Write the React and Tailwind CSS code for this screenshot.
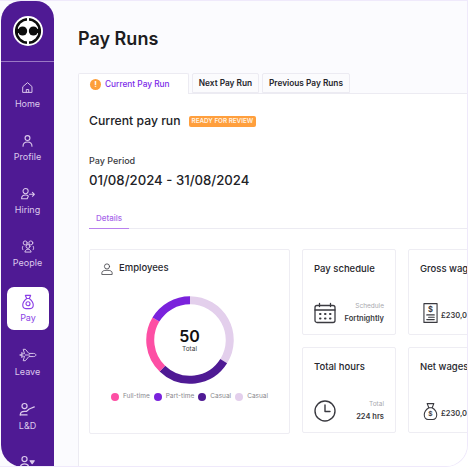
import React from "react";

const S = { fill: "none", stroke: "currentColor", strokeWidth: 1.5, strokeLinecap: "round", strokeLinejoin: "round" };

const icons = {
  Home: (
    <svg viewBox="0 0 16 16" className="w-[13px] h-[13px]" {...S} strokeWidth="1.2">
      <path d="M2.5 6.800 8 2l5.500 4.800V14h-11z" /><path d="M6.500 14v-3.500h3V14" />
    </svg>
  ),
  Profile: (
    <svg viewBox="0 0 16 16" className="w-[13px] h-[13px]" {...S} strokeWidth="1.4">
      <circle cx="8" cy="5" r="3" /><path d="M2.500 15c0-3.400 2.400-5.200 5.500-5.200s5.500 1.800 5.500 5.200" />
    </svg>
  ),
  Hiring: (
    <svg viewBox="0 0 20 16" className="w-[16px] h-[13px]" {...S} strokeWidth="1.300">
      <circle cx="7" cy="5" r="3.200" /><path d="M2 14.500c0-2.800 2-4.500 5-4.500 1.500 0 2.700.4 3.500 1.200L9 14.500z" /><path d="M12 9h6M15.500 6.500 18 9l-2.500 2.500" />
    </svg>
  ),
  People: (
    <svg viewBox="0 0 16 16" className="w-[14px] h-[14px]" {...S} strokeWidth="1.100">
      <circle cx="4.800" cy="4.500" r="2.300" /><circle cx="11.200" cy="4.500" r="2.300" /><circle cx="8" cy="8.500" r="2.200" /><path d="M2 8.500c-.8 1.500-.6 2.700.2 3.800M14 8.500c.8 1.500.6 2.700-.2 3.800M4.500 14.500c.5-2 1.800-2.800 3.500-2.800s3 .8 3.500 2.800z" />
    </svg>
  ),
  Pay: (
    <svg viewBox="0 0 16 18" className="w-[14px] h-[16px]" {...S} strokeWidth="1.300">
      <path d="M5 1.500h6L9.500 5h-3z" /><path d="M6.500 5C3.500 7.500 2 10 2 12.500 2 15 3.500 16.500 5.500 16.500h5c2 0 3.500-1.500 3.500-4 0-2.500-1.500-5-4.500-7.500" /><circle cx="8" cy="11" r="2.300" />
    </svg>
  ),
  Leave: (
    <svg viewBox="0 0 20 16" className="w-[18px] h-[14px]" {...S} strokeWidth="1.100">
      <path d="M1 8c1-1 3-1.500 5-1.500L4.500 1.500h2.500L11 6.200h5.500c1.500 0 2.500.9 2.500 1.800s-1 1.800-2.500 1.800H11L7 14.500H4.500L6 9.500C4 9.500 2 9 1 8z" /><path d="M3 5v6M7 8h5" />
    </svg>
  ),
  "L&D": (
    <svg viewBox="0 0 20 16" className="w-[17px] h-[14px]" {...S} strokeWidth="1.400">
      <circle cx="6.500" cy="4.500" r="3" /><path d="M1.500 15c0-3 2-4.300 5-4.300h2.500L12 8l6-2.500" /><path d="M1.500 15h8" />
    </svg>
  ),
  More: (
    <svg viewBox="0 0 20 16" className="w-[17px] h-[14px]" {...S} strokeWidth="1.400">
      <circle cx="6.500" cy="4.500" r="3" /><path d="M1.500 15c0-3.200 2-4.800 5-4.800s5 1.600 5 4.800" /><path d="M13 6.500h5L15.500 10z" fill="currentColor" />
    </svg>
  ),
};

function NavItem({ label, active, h }) {
  if (active) {
    return (
      <div className="ml-[6px] w-[42px] h-[43px] rounded-[7px] bg-white text-[#8b3fe6] flex flex-col items-center justify-center gap-[2px] text-[9px] leading-[12px] my-[7px]">
        {icons[label]}
        <span>{label}</span>
      </div>
    );
  }
  return (
    <div className={`${h} shrink-0 flex flex-col items-center justify-center gap-[4px] text-[#dcc9ec] text-[9px] leading-[12px]`}>
      {icons[label]}
      {label !== "More" && <span>{label}</span>}
    </div>
  );
}

function Sidebar() {
  return (
    <aside className="w-[53px] h-[466px] ml-px shrink-0 bg-[#4f1a94] rounded-tr-[18px] rounded-tl-[20px] rounded-bl-[22px] flex flex-col overflow-hidden">
      <div className="h-[61px] shrink-0 border-b border-[#9a78c4] flex items-center justify-center">
        <svg viewBox="0 0 30 30" className="w-[30px] h-[30px]">
          <circle cx="15" cy="15" r="15" fill="#fff" />
          <circle cx="15" cy="15" r="11.800" fill="none" stroke="#0c0c0c" strokeWidth="2.600" />
          <path d="M2 15h7M21 15h7" stroke="#0c0c0c" strokeWidth="4" />
          <circle cx="9.600" cy="15" r="4.600" fill="#0c0c0c" />
          <circle cx="20.400" cy="15" r="4.600" fill="#0c0c0c" />
          <path d="M15 1.500v4.500M15 24v4.500" stroke="#fff" strokeWidth="2" />
        </svg>
      </div>
      <div className="flex flex-col pt-[7px]">
        <NavItem label="Home" h="h-[53px]" />
        <NavItem label="Profile" h="h-[53px]" />
        <NavItem label="Hiring" h="h-[52px]" />
        <NavItem label="People" h="h-[53px]" />
        <NavItem label="Pay" active />
        <NavItem label="Leave" h="h-[52px]" />
        <NavItem label="L&D" h="h-[55px]" />
        <NavItem label="More" h="h-[35px]" />
      </div>
    </aside>
  );
}

function Tab({ children, active }) {
  return (
    <div
      className={
        active
          ? "w-[111px] h-[21px] -mb-px bg-white border border-b-0 border-[#ecebf2] rounded-t-[2px] flex items-center gap-[4px] pl-[11px] text-[#7c2ae8] text-[8.300px] font-medium z-10 whitespace-nowrap"
          : "h-[20px] bg-[#fbfbfd] border border-[#ecebf2] rounded-t-[2px] flex items-center justify-center text-[#26262c] text-[8.300px] font-semibold whitespace-nowrap"
      }
    >
      {children}
    </div>
  );
}

function Card({ title, label, value, icon, right }) {
  return (
    <div className="w-[94px] h-[86px] shrink-0 bg-white border border-[#eeedf3] rounded-[2px] pt-[12px] px-[11px] flex flex-col justify-between pb-[10px]">
      <div className="text-[9.500px] font-medium text-[#26262c] leading-[13px] whitespace-nowrap">{title}</div>
      {right ? (
        <div className="flex items-center justify-between text-[#3a3a40]">
          {icon}
          <div className="text-right">
            <div className="text-[6.500px] text-[#a8a8ae] mb-[4px] leading-[8px]">{label}</div>
            <div className="text-[7.500px] font-semibold text-[#3a3a40] leading-[10px] whitespace-nowrap">{value}</div>
          </div>
        </div>
      ) : (
        <div className="flex items-end gap-[3px] pl-[3px] text-[#3a3a40]">
          {icon}
          <div className="text-[7.500px] font-semibold text-[#3a3a40] leading-[10px] whitespace-nowrap mb-[3px]">{value}</div>
        </div>
      )}
    </div>
  );
}

const Legend = ({ color, label }) => (
  <div className="flex items-center gap-[4px]">
    <span className={`w-[8px] h-[8px] rounded-full ${color}`} />
    <span>{label}</span>
  </div>
);

function seg(startDeg, endDeg, r = 39.75) {
  const p = (d) => {
    const a = ((d - 90) * Math.PI) / 180;
    return `${44 + r * Math.cos(a)} ${44 + r * Math.sin(a)}`;
  };
  return `M${p(startDeg)} A${r} ${r} 0 ${endDeg - startDeg > 180 ? 1 : 0} 1 ${p(endDeg)}`;
}

function Donut() {
  return (
    <div className="relative w-[88px] h-[88px]">
      <svg viewBox="0 0 88 88" className="w-[88px] h-[88px]" fill="none" strokeWidth="8">
        <path d={seg(0, 122)} stroke="#e3cfec" />
        <path d={seg(122, 224)} stroke="#4f1a94" />
        <path d={seg(224, 301)} stroke="#fd4fa4" />
        <path d={seg(301, 360)} stroke="#7a22dc" />
      </svg>
      <div className="absolute inset-0 flex flex-col items-center justify-center">
        <div className="text-[16px] font-semibold text-[#111] leading-[18px]">50</div>
        <div className="text-[6.500px] text-[#3a3a40] leading-[9px]">Total</div>
      </div>
    </div>
  );
}

export default function App() {
  return (
    <div className="w-[468px] h-[468px] overflow-hidden bg-white flex" style={{ fontFamily: '"Inter", "Noto Sans", sans-serif' }}>
      <div className="w-[468px] h-[467px] rounded-br-[22px] bg-[#fbfbfe] border-t border-b border-r border-[#efe9fb] flex overflow-hidden">
        <Sidebar />
        <main className="grow min-w-0 pl-[24px] flex flex-col">
          <h1 className="text-[18px] font-semibold text-[#1c1c20] leading-[24px] mt-[26px] mb-[21px]">Pay Runs</h1>
          <div className="flex gap-[3px] items-end h-[21px]">
            <Tab active>
              <span className="w-[11px] h-[11px] rounded-full bg-[#fd9f3a] text-white text-[8px] font-bold flex items-center justify-center">!</span>
              Current Pay Run
            </Tab>
            <div className="w-[67px]"><Tab>Next Pay Run</Tab></div>
            <div className="w-[88px]"><Tab>Previous Pay Runs</Tab></div>
          </div>
          <section className="grow bg-white border-t border-l border-[#ecebf2] pl-[10px] pt-[20px]">
            <div className="flex items-center gap-[8px] h-[14px]">
              <span className="text-[12.200px] leading-[14px] font-medium text-[#222226] whitespace-nowrap">Current pay run</span>
              <span className="bg-[#ff9f3d] text-[#fff3e3] text-[6.300px] leading-[11px] font-semibold rounded-[2px] px-[3px] h-[11px] whitespace-nowrap">READY FOR REVIEW</span>
            </div>
            <div className="text-[9px] font-medium text-[#3a3a40] mt-[27px] leading-[12px]">Pay Period</div>
            <div className="text-[13.200px] font-medium text-[#222226] mt-[4px] leading-[18px] whitespace-nowrap">01/08/2024 - 31/08/2024</div>
            <div className="mt-[20px] border-b border-[#ecebf2] h-[20px]">
              <div className="w-[40px] h-[20px] border-b-[1.500px] border-[#b981ee] text-[#a765ea] text-[8px] font-medium text-center leading-[18px]">Details</div>
            </div>
            <div className="flex gap-[12px] mt-[20px]">
              <div className="w-[201px] h-[185px] shrink-0 bg-white border border-[#eeedf3] rounded-[2px] flex flex-col">
                <div className="flex items-center gap-[6px] pl-[11px] pt-[11px] h-[26px] text-[#4a4a50]">
                  <svg viewBox="0 0 14 14" className="w-[12px] h-[12px]" {...S} strokeWidth="1">
                    <circle cx="7" cy="4" r="3" /><path d="M1 13v-1.500C1 9.500 3 8.500 7 8.500s6 1 6 3V13z" />
                  </svg>
                  <span className="text-[9.500px] font-medium text-[#2a2a30]">Employees</span>
                </div>
                <div className="flex justify-center mt-[20px]"><Donut /></div>
                <div className="flex justify-center gap-[4px] mt-[8px] text-[6.500px] text-[#88888e] whitespace-nowrap">
                  <Legend color="bg-[#fd4fa4]" label="Full-time" />
                  <Legend color="bg-[#7a22dc]" label="Part-time" />
                  <Legend color="bg-[#4f1a94]" label="Casual" />
                  <Legend color="bg-[#e3cfec]" label="Casual" />
                </div>
              </div>
              <div className="flex flex-col gap-[12px] shrink-0">
                <div className="flex gap-[12px]">
                  <Card
                    title="Pay schedule"
                    label="Schedule"
                    value="Fortnightly"
                    right
                    icon={
                      <svg viewBox="0 0 22 22" className="w-[22px] h-[22px]" {...S} strokeWidth="1.300">
                        <rect x="1" y="3.500" width="20" height="17" rx="2" /><path d="M1 8h20M5.500 1.500v3M16.500 1.500v3" />
                        <path d="M6 12h.5M11 12h.5M16 12h.5M6 16.500h.5M11 16.500h.5M16 16.500h.5" strokeWidth="2" />
                      </svg>
                    }
                  />
                  <Card
                    title="Gross wages"
                    value="£230,000"
                    icon={
                      <svg viewBox="0 0 16 22" className="w-[15px] h-[22px] shrink-0" {...S} strokeWidth="1.200">
                        <rect x="1" y="1" width="14" height="20" />
                        <path d="M4 13h8M6 15.500h6M4 18h8" />
                        <text x="8" y="10" fontSize="8" fontWeight="700" textAnchor="middle" fill="currentColor" stroke="none">$</text>
                      </svg>
                    }
                  />
                </div>
                <div className="flex gap-[12px]">
                  <Card
                    title="Total hours"
                    label="Total"
                    value="224 hrs"
                    right
                    icon={
                      <svg viewBox="0 0 22 22" className="w-[22px] h-[22px]" {...S} strokeWidth="1.400">
                        <circle cx="11" cy="11" r="10" /><path d="M11 5v6.500h5" />
                      </svg>
                    }
                  />
                  <Card
                    title="Net wages"
                    value="£230,000"
                    icon={
                      <svg viewBox="0 0 18 22" className="w-[15px] h-[21px] shrink-0" {...S} strokeWidth="1.300">
                        <path d="M5 1.500h8L11 6.500H7z" /><path d="M7 6.500C3 9 1.500 12 1.500 15c0 3 2 5.500 4.500 5.500h6c2.500 0 4.500-2.500 4.500-5.500 0-3-1.500-6-5.500-8.500" />
                        <text x="9" y="17" fontSize="8" fontWeight="700" textAnchor="middle" fill="currentColor" stroke="none">$</text>
                      </svg>
                    }
                  />
                </div>
              </div>
            </div>
          </section>
        </main>
      </div>
    </div>
  );
}
